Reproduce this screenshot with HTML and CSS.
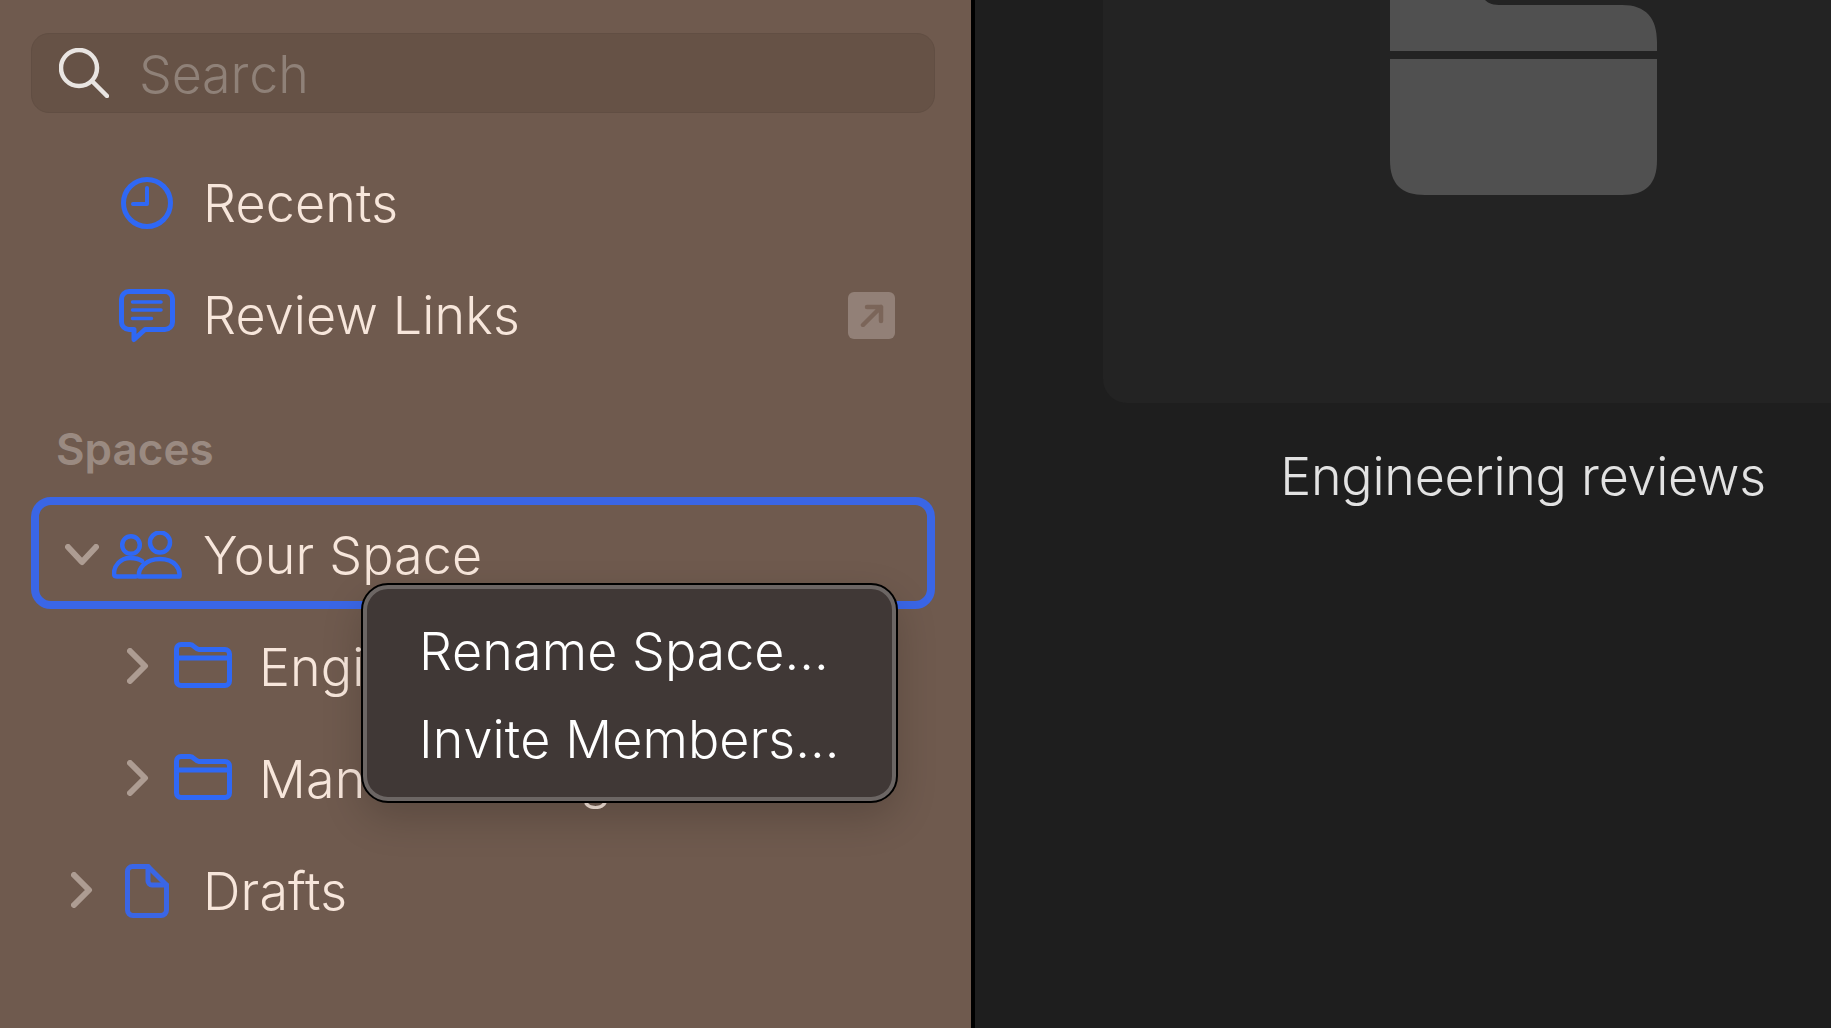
FILE: index.html
```html
<!DOCTYPE html>
<html lang="en">
<head>
<meta charset="utf-8">
<title>Spaces</title>
<link rel="stylesheet" href="styles.css">
</head>
<body>
<div class="app">
  <aside class="sidebar">
    <div class="search">
      <svg class="search-icon" viewBox="0 0 50 50"><circle cx="20" cy="20" r="18" /><path d="M33 33 48 48" /></svg>
      <span class="search-text">Search</span>
    </div>
    <nav class="nav">
      <div class="row">
        <span class="chev"></span>
        <span class="slot"><svg class="ic" width="52" height="52" viewBox="0 0 52 52"><circle cx="26" cy="26" r="23.500"/><path d="M26 11V27H12" stroke-width="4"/></svg></span>
        <span class="label">Recents</span>
      </div>
      <div class="row">
        <span class="chev"></span>
        <span class="slot"><svg class="ic ic-low" width="56" height="54" viewBox="0 0 56 54"><path d="M10 2.500H46A7.500 7.500 0 0 1 53.500 10V33A7.500 7.500 0 0 1 46 40.500H26L15 50.500V40.500H10A7.500 7.500 0 0 1 2.500 33V10A7.500 7.500 0 0 1 10 2.500Z"/><path d="M13.500 13H42M13.500 21H42M13.500 29.500H32.500" stroke-width="3.500"/></svg></span>
        <span class="label">Review Links</span>
        <span class="badge"><svg class="badge-arrow" width="24" height="24" viewBox="0 0 24 24"><path d="M3 22 21 4M7 4H21V18"/></svg></span>
      </div>
      <div class="section">Spaces</div>
      <div class="row row-focus">
        <span class="chev"><svg class="chev-ic" width="34" height="22" viewBox="0 0 34 22"><path d="M3 3 17 18 31 3"/></svg></span>
        <span class="slot"><svg class="ic ic-people" width="70" height="48" viewBox="0 0 70 48"><circle cx="19" cy="14" r="8.800"/><circle cx="48" cy="11.500" r="10"/><path d="M30 30C26 27 22 27 18 27 8 27 2 35 2 42.500 2 44.500 3 45.500 5 45.500H24"/><path d="M27 45.500C26 38 33 28 48 28S68.500 38 67.500 45.500Z"/></svg></span>
        <span class="label">Your Space</span>
      </div>
      <div class="row row-nested row-low">
        <span class="chev"><svg class="chev-ic" width="22" height="36" viewBox="0 0 22 36"><path d="M3 3 18 18 3 33"/></svg></span>
        <span class="slot"><svg class="ic" width="58" height="46" viewBox="0 0 58 46"><path d="M7 2.500H16C20 2.500 21 7 25 7.500H51A4.500 4.500 0 0 1 55.500 12V39A4.500 4.500 0 0 1 51 43.500H7A4.500 4.500 0 0 1 2.500 39V7A4.500 4.500 0 0 1 7 2.500Z"/><path d="M2.500 16H55.500"/></svg></span>
        <span class="label">Engineering</span>
      </div>
      <div class="row row-nested row-low">
        <span class="chev"><svg class="chev-ic" width="22" height="36" viewBox="0 0 22 36"><path d="M3 3 18 18 3 33"/></svg></span>
        <span class="slot"><svg class="ic" width="58" height="46" viewBox="0 0 58 46"><path d="M7 2.500H16C20 2.500 21 7 25 7.500H51A4.500 4.500 0 0 1 55.500 12V39A4.500 4.500 0 0 1 51 43.500H7A4.500 4.500 0 0 1 2.500 39V7A4.500 4.500 0 0 1 7 2.500Z"/><path d="M2.500 16H55.500"/></svg></span>
        <span class="label">Manufacturing</span>
      </div>
      <div class="row row-low">
        <span class="chev"><svg class="chev-ic" width="22" height="36" viewBox="0 0 22 36"><path d="M3 3 18 18 3 33"/></svg></span>
        <span class="slot"><svg class="ic ic-doc" width="44" height="54" viewBox="0 0 44 54"><path d="M7.500 2.500H23L41.500 21V46A5.500 5.500 0 0 1 36 51.500H8A5.500 5.500 0 0 1 2.500 46V7.500A5 5 0 0 1 7.500 2.500Z"/><path d="M23 2.500V17A4 4 0 0 0 27 21H41.500"/></svg></span>
        <span class="label">Drafts</span>
      </div>
    </nav>
    <div class="menu">
      <div class="menu-item">Rename Space...</div>
      <div class="menu-item">Invite Members...</div>
    </div>
  </aside>
  <main class="main">
    <div class="tile">
      <div class="thumb">
        <svg class="folder" width="268" height="196" viewBox="0 0 268 196"><path d="M0 0H95C99 4 103 5 112 5H232C256 5 267 18 267 42V51H0Z"/><path d="M0 59H267V160C267 184 256 195 232 195H35C11 195 0 184 0 160Z"/></svg>
      </div>
      <div class="tile-name">Engineering reviews</div>
    </div>
  </main>
</div>
</body>
</html>
```

FILE: styles.css
```css
* { box-sizing: border-box; }
html, body { margin: 0; height: 100%; }
body { background: #1e1e1e; font-family: Inter, "Noto Sans", sans-serif; overflow: hidden; }

.app { display: flex; width: 1831px; height: 1028px; overflow: hidden; }

.sidebar {
  position: relative;
  flex: 0 0 975px;
  padding: 33px 36px 0 31px;
  background: #6f5a4e;
  border-right: 4px solid #000;
}

.search {
  display: flex;
  align-items: center;
  height: 80px;
  padding-left: 27px;
  background: #665246;
  border: 1px solid #614e43;
  border-radius: 18px;
}
.search-icon { width: 50px; height: 50px; fill: none; stroke: #e9e5e2; stroke-width: 4.500; stroke-linecap: round; }
.search-text { margin: 2px 0 0 30px; font-size: 52px; font-weight: 300; font-kerning: none; color: #8f8178; }

.nav { margin-top: 34px; }

.row {
  display: flex;
  align-items: center;
  height: 112px;
  padding-left: 31px;
}
.row-focus {
  outline: 8px solid #3a66e6;
  outline-offset: -8px;
  border-radius: 20px;
  padding-top: 4px;
}
.row-nested { padding-left: 87px; }
.chev { flex: 0 0 40px; display: flex; justify-content: center; align-items: center; }
.chev-ic { fill: none; stroke: #ad9c92; stroke-width: 6; stroke-linecap: round; stroke-linejoin: round; }
.row-low .chev { margin-top: 2px; }
.slot { flex: 0 0 70px; margin-left: 10px; display: flex; justify-content: center; align-items: center; }
.ic { fill: none; stroke: #2f68f5; stroke-width: 5; stroke-linecap: round; stroke-linejoin: round; }
.ic-low { margin-top: 2px; }
.ic-people { stroke-width: 4.500; }
.ic-doc { margin-top: 3px; stroke: #3a66e6; }
.label { margin: 0 0 0 21px; font-size: 52px; font-weight: 300; letter-spacing: 0.150px; color: #f7e6db; white-space: nowrap; }
.row-low .label { margin-top: 4px; }

.badge {
  display: flex;
  align-items: center;
  justify-content: center;
  width: 47px;
  height: 47px;
  margin-left: auto;
  margin-right: 40px;
  background: #928077;
  border-radius: 6px;
}
.badge-arrow { fill: none; stroke: #7b6559; stroke-width: 4.500; stroke-linecap: round; stroke-linejoin: round; }

.section {
  height: 126px;
  padding: 52px 0 0 25px;
  font-size: 44px;
  font-weight: 600;
  line-height: 52px;
  color: #9a8a81;
}

.menu {
  position: absolute;
  left: 362px;
  top: 584px;
  width: 535px;
  height: 218px;
  padding: 19px 0 0 52px;
  background: #403836;
  border: 5px solid #6c6664;
  border-radius: 26px;
  outline: 2px solid #000;
  outline-offset: -1px;
  box-shadow: 0 16px 40px rgba(0, 0, 0, 0.18);
}
.menu-item { height: 88px; line-height: 88px; font-size: 52px; font-weight: 300; font-kerning: none; letter-spacing: 0.100px; color: #fff; white-space: nowrap; }

.main {
  flex: 1;
  min-width: 0;
  padding-left: 128px;
  background: #1e1e1e;
}
.tile { width: 840px; }
.thumb {
  display: flex;
  justify-content: center;
  height: 403px;
  background: #232323;
  border-radius: 0 0 24px 24px;
}
.folder { margin-left: 2px; fill: #505050; }
.tile-name { margin-top: 42px; text-align: center; font-size: 52px; font-weight: 300; letter-spacing: -0.250px; color: #e2e2e2; }
```
